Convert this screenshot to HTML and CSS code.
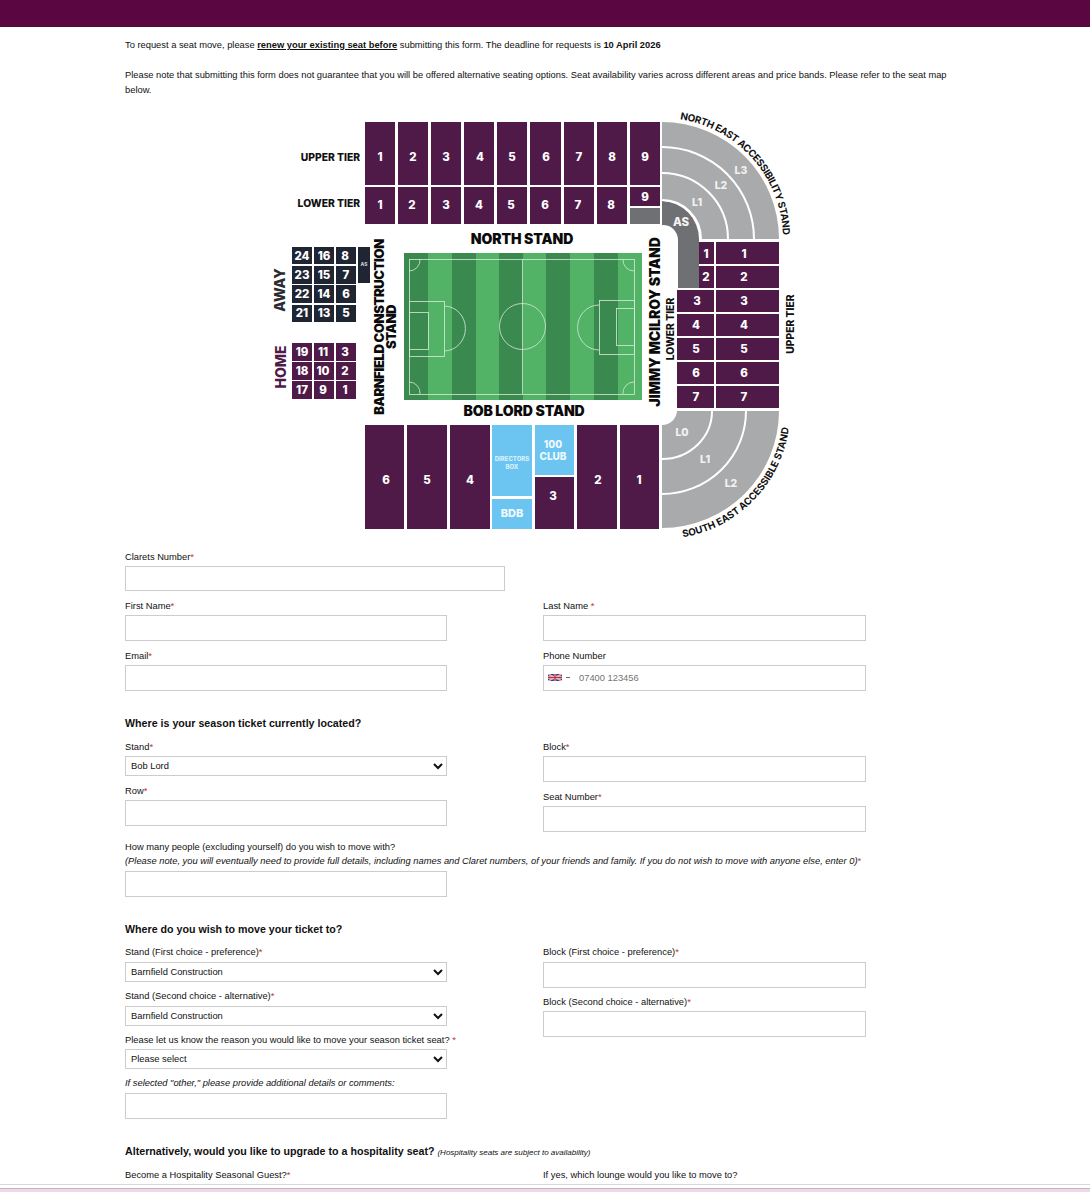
FILE: index.html
```html
<!DOCTYPE html>
<html lang="en">
<head>
<meta charset="utf-8">
<title>Seat move request</title>
<link rel="stylesheet" href="styles.css">
</head>
<body>
<header class="topbar"></header>
<main class="main">
  <p class="intro first">To request a seat move, please <strong class="u">renew your existing seat before</strong> submitting this form. The deadline for requests is <strong>10 April 2026</strong></p>
  <p class="intro">Please note that submitting this form does not guarantee that you will be offered alternative seating options. Seat availability varies across different areas and price bands. Please refer to the seat map below.</p>

  <svg class="map" viewBox="270 105 530 435" width="530" height="435" role="img" aria-label="Seat map">
    <defs>
      <path id="arcNE" d="M662 118 A121 121 0 0 1 783 239"/>
      <path id="arcSE" d="M662 539 A128 128 0 0 0 790 411"/>
    </defs>
    <!-- north stand -->
    <g class="claret">
      <rect x="365" y="122" width="30" height="63"/><rect x="398" y="122" width="30" height="63"/><rect x="431" y="122" width="30" height="63"/><rect x="464" y="122" width="30" height="63"/><rect x="497" y="122" width="30" height="63"/><rect x="530" y="122" width="31" height="63"/><rect x="564" y="122" width="30" height="63"/><rect x="597" y="122" width="30" height="63"/><rect x="630" y="122" width="30" height="63"/>
      <rect x="365" y="187" width="30" height="37"/><rect x="398" y="187" width="30" height="37"/><rect x="431" y="187" width="30" height="37"/><rect x="464" y="187" width="30" height="37"/><rect x="497" y="187" width="30" height="37"/><rect x="530" y="187" width="31" height="37"/><rect x="564" y="187" width="30" height="37"/><rect x="597" y="187" width="30" height="37"/><rect x="630" y="187" width="30" height="19"/>
    </g>
    <rect class="as" x="630" y="208" width="30" height="16"/>
    <g class="num">
      <text x="380" y="161">1</text><text x="413" y="161">2</text><text x="446" y="161">3</text><text x="480" y="161">4</text><text x="512" y="161">5</text><text x="546" y="161">6</text><text x="579" y="161">7</text><text x="612" y="161">8</text><text x="645" y="161">9</text>
      <text x="380" y="209">1</text><text x="412" y="209">2</text><text x="446" y="209">3</text><text x="479" y="209">4</text><text x="511" y="209">5</text><text x="545" y="209">6</text><text x="578" y="209">7</text><text x="611" y="209">8</text><text x="645" y="201">9</text>
    </g>
    <text class="lab end" x="360" y="161">UPPER TIER</text>
    <text class="lab end" x="360" y="207">LOWER TIER</text>

    <!-- north east -->
    <path class="grey" d="M662 122 A117 117 0 0 1 779 239 H701 A39 39 0 0 0 662 200 Z"/>
    <path class="arc" d="M662 147 A92 92 0 0 1 754 239"/>
    <path class="arc" d="M662 173 A66 66 0 0 1 728 239"/>
    <path class="as" d="M662 201 A38 38 0 0 1 699 239 V288 H678 V240 A15 15 0 0 0 662 225 Z"/>
    <path class="arcw" d="M662 200 A39 39 0 0 1 701 239"/>
    <text class="zone" x="741" y="174">L3</text><text class="zone" x="721" y="189">L2</text><text class="zone" x="697" y="206">L1</text><text class="zone big" x="681" y="226">AS</text>
    <text class="curve"><textPath href="#arcNE" startOffset="18">NORTH EAST ACCESSIBILITY STAND</textPath></text>

    <!-- jimmy mcilroy -->
    <g class="claret">
      <rect x="716" y="242" width="63" height="22"/><rect x="716" y="266" width="63" height="22"/><rect x="716" y="290" width="63" height="22"/><rect x="716" y="314" width="63" height="22"/><rect x="716" y="338" width="63" height="22"/><rect x="716" y="362" width="63" height="22"/><rect x="716" y="386" width="63" height="22"/>
      <rect x="699" y="242" width="15" height="22"/><rect x="699" y="266" width="15" height="22"/><rect x="677" y="290" width="37" height="22"/><rect x="677" y="314" width="37" height="22"/><rect x="677" y="338" width="37" height="22"/><rect x="677" y="362" width="37" height="22"/><rect x="677" y="386" width="37" height="22"/>
    </g>
    <g class="num">
      <text x="744" y="258">1</text><text x="744" y="281">2</text><text x="744" y="305">3</text><text x="744" y="329">4</text><text x="744" y="353">5</text><text x="744" y="377">6</text><text x="744" y="401">7</text>
      <text x="706" y="258">1</text><text x="706" y="281">2</text><text x="697" y="305">3</text><text x="696" y="329">4</text><text x="696" y="353">5</text><text x="696" y="377">6</text><text x="696" y="401">7</text>
    </g>
    <text class="lab mid" transform="translate(794 324) rotate(-90)">UPPER TIER</text>
    <text class="lab mid" transform="translate(674 329) rotate(-90)">LOWER TIER</text>
    <text class="stand mid" transform="translate(660 322) rotate(-90)">JIMMY MCILROY STAND</text>

    <!-- pitch -->
    <rect class="pd" x="404" y="253" width="238" height="147"/>
    <rect class="pl" x="428" y="253" width="24" height="147"/><rect class="pl" x="476" y="253" width="23" height="147"/><rect class="pl" x="523" y="253" width="23" height="147"/><rect class="pl" x="570" y="253" width="24" height="147"/><rect class="pl" x="618" y="253" width="24" height="147"/>
    <g class="line">
      <rect x="409.5" y="259.5" width="225" height="135"/>
      <path d="M522.5 259 V394"/>
      <circle cx="522.5" cy="326.5" r="23"/>
      <rect x="409.5" y="301.5" width="35" height="55"/>
      <rect x="409.5" y="312.5" width="19" height="37"/>
      <rect x="599.5" y="300.5" width="35" height="54"/>
      <rect x="616.5" y="308.5" width="18" height="37"/>
      <path d="M444 306 A20 21 0 0 1 444 351"/>
      <path d="M599 305 A20 21 0 0 0 599 350"/>
      <path d="M420 259 A11 11 0 0 1 409 271"/><path d="M623 259 A11 11 0 0 0 634 271"/><path d="M409 382 A11 11 0 0 1 420 394"/><path d="M634 382 A11 11 0 0 0 623 394"/>
    </g>
    <text class="stand mid" x="522" y="244">NORTH STAND</text>
    <text class="stand mid" x="524" y="416">BOB LORD STAND</text>
    <text class="stand narrow mid" transform="translate(384 327) rotate(-90)">BARNFIELD CONSTRUCTION</text>
    <text class="stand narrow mid" transform="translate(396 327) rotate(-90)">STAND</text>

    <!-- barnfield blocks -->
    <g class="dark">
      <rect x="292" y="247" width="20" height="17"/><rect x="314" y="247" width="20" height="17"/><rect x="336" y="247" width="20" height="17"/>
      <rect x="292" y="266" width="20" height="18"/><rect x="314" y="266" width="20" height="18"/><rect x="336" y="266" width="20" height="18"/>
      <rect x="292" y="285" width="20" height="18"/><rect x="314" y="285" width="20" height="18"/><rect x="336" y="285" width="20" height="18"/>
      <rect x="292" y="305" width="20" height="17"/><rect x="314" y="305" width="20" height="17"/><rect x="336" y="305" width="20" height="17"/>
      <rect x="358" y="247" width="12" height="36"/>
    </g>
    <g class="claret">
      <rect x="292" y="343" width="20" height="18"/><rect x="314" y="343" width="20" height="18"/><rect x="336" y="343" width="20" height="18"/>
      <rect x="292" y="362" width="20" height="18"/><rect x="314" y="362" width="20" height="18"/><rect x="336" y="362" width="20" height="18"/>
      <rect x="292" y="381" width="20" height="18"/><rect x="314" y="381" width="20" height="18"/><rect x="336" y="381" width="20" height="18"/>
    </g>
    <g class="num small">
      <text x="302" y="260">24</text><text x="324" y="260">16</text><text x="345" y="260">8</text>
      <text x="302" y="279">23</text><text x="324" y="279">15</text><text x="346" y="279">7</text>
      <text x="302" y="298">22</text><text x="324" y="298">14</text><text x="346" y="298">6</text>
      <text x="302" y="317">21</text><text x="324" y="317">13</text><text x="346" y="317">5</text>
      <text x="302" y="356">19</text><text x="323" y="356">11</text><text x="345" y="356">3</text>
      <text x="302" y="375">18</text><text x="323" y="375">10</text><text x="345" y="375">2</text>
      <text x="302" y="394">17</text><text x="323" y="394">9</text><text x="345" y="394">1</text>
    </g>
    <text class="tiny" x="364" y="266">AS</text>
    <text class="side mid" transform="translate(285 290) rotate(-90)">AWAY</text>
    <text class="side mid home" transform="translate(286 367) rotate(-90)">HOME</text>

    <!-- bob lord -->
    <g class="claret">
      <rect x="365" y="425" width="39" height="104"/><rect x="407" y="425" width="40" height="104"/><rect x="450" y="425" width="40" height="104"/><rect x="535" y="477" width="39" height="52"/><rect x="577" y="425" width="40" height="104"/><rect x="620" y="425" width="39" height="104"/>
    </g>
    <g class="blue">
      <rect x="492" y="425" width="40" height="71"/><rect x="492" y="499" width="40" height="30"/><rect x="535" y="425" width="39" height="50"/>
    </g>
    <g class="num">
      <text x="386" y="484">6</text><text x="427" y="484">5</text><text x="470" y="484">4</text><text x="553" y="500">3</text><text x="598" y="484">2</text><text x="639" y="484">1</text>
    </g>
    <text class="tiny2" x="512" y="461">DIRECTORS</text>
    <text class="tiny2" x="512" y="469">BOX</text>
    <text class="blab bdb" x="512" y="517">BDB</text>
    <text class="blab" x="553" y="448">100</text>
    <text class="blab" x="553" y="460">CLUB</text>

    <!-- south east -->
    <path class="grey" d="M662 425 A15 15 0 0 0 677 411 H779 A117 117 0 0 1 662 528 Z"/>
    <path class="arc" d="M712 411 A50 48 0 0 1 662 459"/>
    <path class="arc" d="M746 411 A84 83 0 0 1 662 494"/>
    <text class="zone" x="682" y="436">L0</text><text class="zone" x="705" y="463">L1</text><text class="zone" x="731" y="487">L2</text>
    <text class="curve se"><textPath href="#arcSE" startOffset="21">SOUTH EAST ACCESSIBLE STAND</textPath></text>
  </svg>

  <form class="form">
    <div class="field wide">
      <label class="label">Clarets Number<span class="req">*</span></label>
      <input class="input short" type="text">
    </div>
    <div class="cols">
      <div class="col">
        <div class="field"><label class="label">First Name<span class="req">*</span></label><input class="input" type="text"></div>
        <div class="field"><label class="label">Email<span class="req">*</span></label><input class="input" type="text"></div>
      </div>
      <div class="col">
        <div class="field"><label class="label">Last Name <span class="req">*</span></label><input class="input" type="text"></div>
        <div class="field">
          <label class="label">Phone Number</label>
          <div class="phone">
            <span class="dial">
              <svg class="flag" viewBox="0 0 60 30" width="14" height="7"><rect width="60" height="30" fill="#2b3a78"/><path d="M0 0 60 30M60 0 0 30" stroke="#fff" stroke-width="6"/><path d="M0 0 60 30M60 0 0 30" stroke="#c8283c" stroke-width="2"/><path d="M30 0V30M0 15H60" stroke="#fff" stroke-width="10"/><path d="M30 0V30M0 15H60" stroke="#c8283c" stroke-width="6"/></svg>
              <span class="caret"></span>
            </span>
            <input class="input tel" type="text" placeholder="07400 123456">
          </div>
        </div>
      </div>
    </div>

    <h2 class="heading">Where is your season ticket currently located?</h2>
    <div class="cols">
      <div class="col">
        <div class="field"><label class="label">Stand<span class="req">*</span></label><select class="select"><option>Bob Lord</option></select></div>
        <div class="field"><label class="label">Row<span class="req">*</span></label><input class="input" type="text"></div>
      </div>
      <div class="col">
        <div class="field"><label class="label">Block<span class="req">*</span></label><input class="input" type="text"></div>
        <div class="field"><label class="label">Seat Number<span class="req">*</span></label><input class="input" type="text"></div>
      </div>
    </div>
    <div class="field">
      <label class="label two">How many people (excluding yourself) do you wish to move with?<br><em>(Please note, you will eventually need to provide full details, including names and Claret numbers, of your friends and family. If you do not wish to move with anyone else, enter 0)</em><span class="req">*</span></label>
      <input class="input single" type="text">
    </div>

    <h2 class="heading">Where do you wish to move your ticket to?</h2>
    <div class="cols flush">
      <div class="col">
        <div class="field"><label class="label">Stand (First choice - preference)<span class="req">*</span></label><select class="select"><option>Barnfield Construction</option></select></div>
        <div class="field"><label class="label">Stand (Second choice - alternative)<span class="req">*</span></label><select class="select"><option>Barnfield Construction</option></select></div>
        <div class="field"><label class="label tight">Please let us know the reason you would like to move your season ticket seat? <span class="req">*</span></label><select class="select"><option>Please select</option></select></div>
        <div class="field"><label class="label"><em>If selected "other," please provide additional details or comments:</em></label><input class="input" type="text"></div>
      </div>
      <div class="col">
        <div class="field"><label class="label">Block (First choice - preference)<span class="req">*</span></label><input class="input" type="text"></div>
        <div class="field"><label class="label tight">Block (Second choice - alternative)<span class="req">*</span></label><input class="input" type="text"></div>
      </div>
    </div>

    <h2 class="heading last">Alternatively, would you like to upgrade to a hospitality seat? <em class="note">(Hospitality seats are subject to availability)</em></h2>
    <div class="cols flush">
      <div class="col"><label class="label">Become a Hospitality Seasonal Guest?<span class="req">*</span></label></div>
      <div class="col"><label class="label">If yes, which lounge would you like to move to?</label></div>
    </div>
  </form>
</main>
<footer class="strip"></footer>
</body>
</html>
```
FILE: styles.css
```css
* { box-sizing: border-box; }
html, body { margin: 0; height: 100%; }
body {
  display: flex;
  flex-direction: column;
  height: 1192px;
  overflow: hidden;
  background: #fff;
  color: #111;
  font-family: "Liberation Sans", Arial, sans-serif;
  font-size: 9.33px;
}
.topbar { flex: 0 0 27px; background: #5a0641; }
.main {
  flex: 1 1 auto;
  min-height: 0;
  overflow: hidden;
  padding: 0 125px;
  border-bottom: 1px solid #d9d9d9;
}
.strip {
  flex: 0 0 4px;
  margin-top: 3px;
  background: #eed9e8;
  border-top: 1px solid #c9b3c2;
}
.intro { margin: 0 0 15px; line-height: 15px; width: 830px; }
.intro.first { margin-top: 11px; }
.u { text-decoration: underline; }
.map { display: block; margin: -8.5px 0 10px 145px; }

.claret rect { fill: #4f1a47; }
.dark rect { fill: #1f2533; }
.blue rect { fill: #6cc5f0; }
.as { fill: #6f7073; }
.grey { fill: #a9aaab; }
.arc, .arcw { fill: none; stroke: #fff; stroke-width: 2; }
.pd { fill: #3a8a50; }
.pl { fill: #52b266; }
.line { fill: none; stroke: #d5ead9; stroke-width: 0.8; }
.map text { font-family: Inter, "Liberation Sans", sans-serif; font-weight: 800; }
.num text { fill: #fff; font-size: 11.5px; text-anchor: middle; }
.num.small text { font-size: 11.5px; }
.lab { font-size: 10.3px; fill: #111; }
.end { text-anchor: end; }
.mid { text-anchor: middle; }
.map .stand { font-size: 14px; fill: #0b0b0b; font-weight: 900; letter-spacing: -0.1px; }
.map .stand.narrow { font-size: 13px; letter-spacing: -0.4px; }
.side { font-size: 14px; fill: #2b2b30; }
.side.home { fill: #4f1a47; }
.zone { fill: #f2f2f2; font-size: 10.5px; text-anchor: middle; }
.zone.big { font-size: 11.5px; }
.map .curve { font-size: 9.8px; font-weight: 700; fill: #111; letter-spacing: -0.3px; }
.map .curve.se { letter-spacing: 0; }
.tiny { fill: #c9ccd2; font-size: 5px; text-anchor: middle; }
.tiny2 { fill: #d9f0fb; font-size: 6px; text-anchor: middle; }
.blab { fill: #eef8fd; font-size: 10px; text-anchor: middle; }
.blab.bdb { font-size: 11px; }

.form { display: block; }
.cols { display: flex; column-gap: 96px; align-items: flex-start; }
.col { flex: 0 0 322px; width: 322px; }
.field { margin-bottom: 8px; }
.label { display: block; padding-top: 1px; line-height: 12px; margin-bottom: 3px; color: #111; white-space: nowrap; }
.label.two { padding-top: 0; line-height: 14px; margin-bottom: 3px; }
.flush .label { padding-top: 0; margin-bottom: 4px; }
.flush .label.tight { margin-bottom: 3px; }
.req { color: #c0392b; }
.input {
  display: block;
  width: 100%;
  height: 26px;
  padding: 0 6px;
  border: 1px solid #ccc;
  border-radius: 0;
  background: #fff;
  font: inherit;
  color: #222;
}
.col + .col .input { width: 323px; }
.input.single { width: 322px; }
.input.short { width: 380px; height: 25px; }
.input::placeholder { color: #757575; }
.tel { padding-left: 35px; }
.phone { position: relative; width: 323px; }
.dial { position: absolute; left: 5px; top: 9px; display: flex; align-items: center; column-gap: 4px; }
.flag { display: block; }
.caret { width: 4px; height: 1px; background: #666; }
.select {
  display: block;
  width: 322px;
  height: 20px;
  padding: 0 1px;
  border: 1px solid #ccc;
  border-radius: 0;
  background-color: #fff;
  font: inherit;
  color: #111;
}
.heading { margin: 25px 0 10px; font-size: 10.67px; line-height: 14px; font-weight: 700; color: #111; }
.cols + .heading { margin-top: 17px; }
.heading.last { margin-bottom: 9px; }
.note { font-size: 8px; font-weight: 400; }
```
